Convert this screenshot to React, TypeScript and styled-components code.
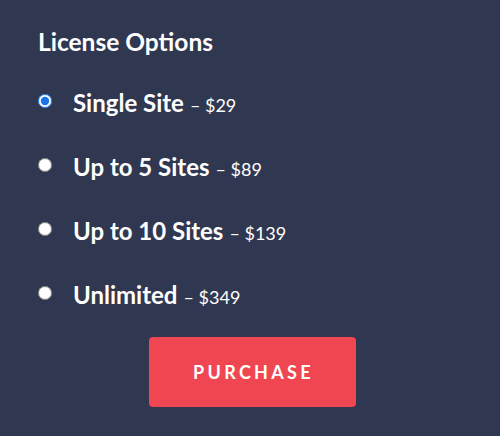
import React, { useState } from "react";
import styled, { createGlobalStyle } from "styled-components";

const Global = createGlobalStyle`
  html, body { margin: 0; padding: 0; background: #303750; }
  body { font-family: Lato, "Open Sans", sans-serif; color: #ffffff; }
`;

const Panel = styled.div`
  width: 500px;
  height: 436px;
  box-sizing: border-box;
  padding: 27px 0 0 38px;
  display: flex;
  flex-direction: column;
`;

const Title = styled.h2`
  margin: 0 0 31px;
  font-size: 24.5px;
  font-weight: 700;
  line-height: 30px;
`;

const List = styled.div`
  display: flex;
  flex-direction: column;
  gap: 34px;
`;

const Row = styled.label`
  display: flex;
  align-items: baseline;
  height: 30px;
  line-height: 30px;
  cursor: pointer;
`;

const Radio = styled.input`
  margin: 6px 21px 0 0;
  width: 14px;
  height: 14px;
  accent-color: #1a73e8;
  align-self: flex-start;
`;

const Name = styled.span`
  font-size: 24px;
  font-weight: 700;
`;

const Price = styled.span`
  font-size: 18px;
  font-weight: 400;
  margin-left: 6px;
`;

const ButtonRow = styled.div`
  display: flex;
  justify-content: center;
  padding-right: 38px;
  margin-top: 27px;
  padding-left: 4px;
`;

const Button = styled.button`
  width: 207px;
  height: 70px;
  border: none;
  border-radius: 4px;
  background: #ef4651;
  color: #ffffff;
  font-family: Lato, sans-serif;
  font-size: 18px;
  font-weight: 700;
  letter-spacing: 3.3px;
  padding: 0 0 0 3px;
  text-transform: uppercase;
  cursor: pointer;
`;

const options = [
  { name: "Single Site", price: "$29" },
  { name: "Up to 5 Sites", price: "$89" },
  { name: "Up to 10 Sites", price: "$139" },
  { name: "Unlimited", price: "$349" },
];

export default function App() {
  const [sel, setSel] = useState(0);
  return (
    <>
      <Global />
      <Panel>
        <Title>License Options</Title>
        <List>
          {options.map((o, i) => (
            <Row key={o.name}>
              <Radio
                type="radio"
                name="license"
                checked={sel === i}
                onChange={() => setSel(i)}
              />
              <Name>{o.name}</Name>
              <Price>– {o.price}</Price>
            </Row>
          ))}
        </List>
        <ButtonRow>
          <Button>Purchase</Button>
        </ButtonRow>
      </Panel>
    </>
  );
}
